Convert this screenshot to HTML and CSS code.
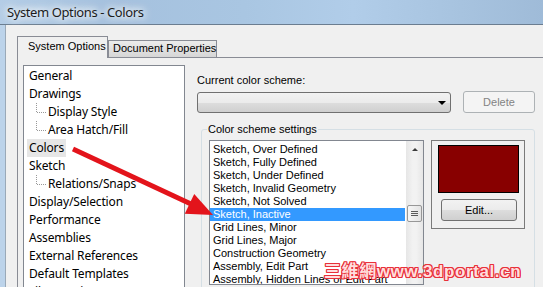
FILE: index.html
```html
<!DOCTYPE html>
<html lang="en">

<head>
    <meta charset="UTF-8" />
    <meta name="viewport" content="width=device-width" />
    <link rel="stylesheet" href="styles.css">
</head>

<body>
    <div class="window">
        <div class="titlebar"><span class="title">System Options - Colors</span></div>

        <div class="frame">
            <div class="client">
                <div class="tabs">
                    <div class="tab active">System Options</div>
                    <div class="tab">Document Properties</div>
                </div>

                <div class="panel">
                    <ul class="tree">
                        <li class="node">General</li>
                        <li class="node">Drawings</li>
                        <li class="node child">Display Style</li>
                        <li class="node child">Area Hatch/Fill</li>
                        <li class="node current">Colors</li>
                        <li class="node">Sketch</li>
                        <li class="node child">Relations/Snaps</li>
                        <li class="node">Display/Selection</li>
                        <li class="node">Performance</li>
                        <li class="node">Assemblies</li>
                        <li class="node">External References</li>
                        <li class="node">Default Templates</li>
                        <li class="node">File Locations</li>
                    </ul>

                    <div class="settings">
                        <div class="label">Current color scheme:</div>
                        <div class="scheme_row">
                            <div class="combo"><span class="combo_arrow"></span></div>
                            <button class="btn" disabled>Delete</button>
                        </div>

                        <fieldset class="group">
                            <legend>Color scheme settings</legend>
                            <div class="group_body">
                                <div class="listbox">
                                    <ul class="items">
                                        <li>Sketch, Over Defined</li>
                                        <li>Sketch, Fully Defined</li>
                                        <li>Sketch, Under Defined</li>
                                        <li>Sketch, Invalid Geometry</li>
                                        <li>Sketch, Not Solved</li>
                                        <li class="selected">Sketch, Inactive</li>
                                        <li>Grid Lines, Minor</li>
                                        <li>Grid Lines, Major</li>
                                        <li>Construction Geometry</li>
                                        <li>Assembly, Edit Part</li>
                                        <li>Assembly, Hidden Lines of Edit Part</li>
                                    </ul>
                                    <div class="scrollbar">
                                        <div class="scroll_up"><span class="up_arrow"></span></div>
                                        <div class="thumb"><span></span><span></span><span></span></div>
                                    </div>
                                </div>

                                <div class="preview">
                                    <div class="swatch"></div>
                                    <button class="btn edit">Edit...</button>
                                </div>
                            </div>
                        </fieldset>
                    </div>
                </div>
            </div>
        </div>

        <!-- red pointer drawn over the dialog -->
        <svg class="pointer" width="543" height="287" viewBox="0 0 543 287">
            <line x1="73" y1="149" x2="191" y2="204" stroke="#e3141b" stroke-width="5" />
            <polygon points="213,215 184.8,213.8 194.2,193.9" fill="#e3141b" />
        </svg>

        <div class="watermark">三維網www.3dportal.cn</div>
    </div>
</body>

</html>
```

FILE: styles.css
```css
/* === dialog css === */

* {
    box-sizing: border-box;
}

body {
    margin: 0;
    font-family: "Noto Sans", "Open Sans", sans-serif;
    font-size: 12px;
    color: #000;
    background: #f0f0f0;
}

.window {
    /* whole screenshot */
    position: relative;
    width: 543px;
    height: 287px;
    overflow: hidden;
    display: flex;
    flex-direction: column;
}

.titlebar {
    /* aero title bar */
    height: 25px;
    flex-shrink: 0;
    padding-left: 7px;
    background: linear-gradient(90deg, #b4cde6 0%, #a5c1de 20%, #a9c6e2 45%, #b1cde9 65%, #a7c3df 85%, #9fbbd8 100%);
    border-bottom: 1px solid #6b7d90;
}

.title {
    font-size: 13px;
    letter-spacing: -0.4px;
    line-height: 24px;
    color: #1c1c1c;
    text-shadow: 0 0 6px #fff, 0 0 10px #fff, 0 0 12px #eaf2fa;
}

.frame {
    /* blue window edge on the left */
    flex: 1;
    display: flex;
    padding-left: 5px;
    background: #bcd3ea;
}

.client {
    flex: 1;
    background: #f0f0f0;
    border-left: 1px solid #9aa9b8;
    padding: 11px 0 0 11px;
    display: flex;
    flex-direction: column;
}

/* classic 8pt dialog text */
.tab,
.label,
.btn,
.group legend,
.items {
    font-family: "Liberation Sans", Arial, sans-serif;
    font-size: 11px;
}

/* tabs */

.tabs {
    display: flex;
    align-items: flex-end;
    height: 21px;
    flex-shrink: 0;
    position: relative;
    z-index: 1;
}

.tab {
    height: 17px;
    padding: 0 0 0 4px;
    width: 109px;
    line-height: 15px;
    white-space: nowrap;
    border: 1px solid #898c95;
    border-bottom: none;
    background: linear-gradient(#ececec, #d6d6d6);
}

.tab.active {
    width: 91px;
    padding: 0 0 0 10px;
    line-height: 19px;
    background: #f0f0f0;
    margin-bottom: -1px;
    height: 22px;
}

.panel {
    flex: 1;
    display: flex;
    align-items: flex-start;
    border-top: 1px solid #898c95;
    border-left: 1px solid #898c95;
    padding: 7px 0 0 5px;
}

/* tree */

.tree {
    list-style: none;
    margin: 0;
    padding: 1px 0 0 3px;
    width: 162px;
    height: 240px;
    flex-shrink: 0;
    background: #fff;
    border: 1px solid #828790;
    letter-spacing: -0.15px;
}

.node {
    position: relative;
    height: 18px;
    line-height: 18px;
    padding: 0 2px;
    width: max-content;
}

.node.child {
    margin-left: 19px;
}

.node.child::before {
    /* vertical dots */
    content: "";
    position: absolute;
    left: -10px;
    top: 0;
    height: 9px;
    border-left: 1px dotted #999;
}

.node.child::after {
    /* horizontal dots */
    content: "";
    position: absolute;
    left: -9px;
    top: 9px;
    width: 9px;
    border-top: 1px dotted #999;
}

.node.current {
    background: #e6e6e6;
}

/* right side */

.settings {
    margin-left: 12px;
    width: 338px;
}

.label {
    margin-top: 7px;
    line-height: 16px;
    height: 16px;
}

.scheme_row {
    display: flex;
    align-items: flex-end;
    margin-top: 3px;
}

.combo {
    width: 254px;
    height: 21px;
    border: 1px solid #707070;
    border-radius: 3px;
    background: linear-gradient(#f2f2f2 0%, #ebebeb 50%, #dddddd 51%, #cfcfcf 100%);
    display: flex;
    justify-content: flex-end;
    align-items: center;
    padding-right: 4px;
}

.combo_arrow {
    width: 0;
    height: 0;
    border-left: 4px solid transparent;
    border-right: 4px solid transparent;
    border-top: 4px solid #000;
}

.btn {
    height: 22px;
    padding: 0;
    border: 1px solid #707070;
    border-radius: 3px;
    background: linear-gradient(#f2f2f2 0%, #ebebeb 50%, #dddddd 51%, #cfcfcf 100%);
    color: #000;
}

.btn:disabled {
    width: 72px;
    margin-left: 12px;
    border-color: #adb2b5;
    background: #f4f4f4;
    color: #838383;
}

/* group box */

.group {
    margin: 8px 0 0 4px;
    width: 334px;
    height: 200px;
    border: 1px solid #d5dfe5;
    border-radius: 3px;
    padding: 0 0 0 7px;
}

.group legend {
    padding: 0 1px;
    margin-left: -2px;
    line-height: 16px;
}

.group_body {
    display: flex;
    align-items: flex-start;
    margin-top: 3px;
}

.listbox {
    width: 215px;
    height: 145px;
    border: 1px solid #828790;
    background: #fff;
    display: flex;
    flex-shrink: 0;
}

.items {
    list-style: none;
    margin: 0;
    padding: 2px 1px 0 0;
    flex: 1;
    overflow: hidden;
    white-space: nowrap;
}

.items li {
    height: 13px;
    line-height: 13px;
    padding-left: 3px;
}

.items li.selected {
    background: #3399ff;
    color: #fff;
}

.scrollbar {
    width: 17px;
    background: linear-gradient(90deg, #e6e6e6, #f2f2f2 40%, #f2f2f2 60%, #e6e6e6);
    display: flex;
    flex-direction: column;
    align-items: center;
}

.scroll_up {
    height: 17px;
    display: flex;
    align-items: center;
    justify-content: center;
}

.up_arrow {
    width: 0;
    height: 0;
    border-left: 3px solid transparent;
    border-right: 3px solid transparent;
    border-bottom: 3px solid #3b3b3b;
}

.thumb {
    margin-top: 47px;
    width: 15px;
    height: 17px;
    border: 1px solid #979797;
    border-radius: 2px;
    background: linear-gradient(90deg, #f6f6f6, #e3e3e3);
    display: flex;
    flex-direction: column;
    align-items: center;
    justify-content: center;
    gap: 1px;
}

.thumb span {
    width: 7px;
    height: 1px;
    background: #5b5b5b;
}

.preview {
    margin-left: 7px;
    width: 94px;
    height: 89px;
    border: 1px solid #7a7a7a;
    display: flex;
    flex-direction: column;
    align-items: center;
    padding-top: 4px;
}

.swatch {
    width: 81px;
    height: 48px;
    border: 1px solid #000;
    background: #880000;
}

.btn.edit {
    margin-top: 6px;
    width: 76px;
    margin-left: 2px;
}

/* overlays */

.pointer {
    position: absolute;
    left: 0;
    top: 0;
}

.watermark {
    position: absolute;
    left: 324px;
    top: 262px;
    font-family: "Liberation Sans", "Noto Sans CJK TC", sans-serif;
    font-weight: bold;
    font-size: 17px;
    line-height: 20px;
    letter-spacing: 0.6px;
    color: #ffdede;
    text-shadow: 1px 0 0 #e8313a, -1px 0 0 #e8313a, 0 1px 0 #e8313a, 0 -1px 0 #e8313a, 1px 1px 0 #e8313a, -1px -1px 0 #e8313a, 1px -1px 0 #e8313a, -1px 1px 0 #e8313a;
}
```
